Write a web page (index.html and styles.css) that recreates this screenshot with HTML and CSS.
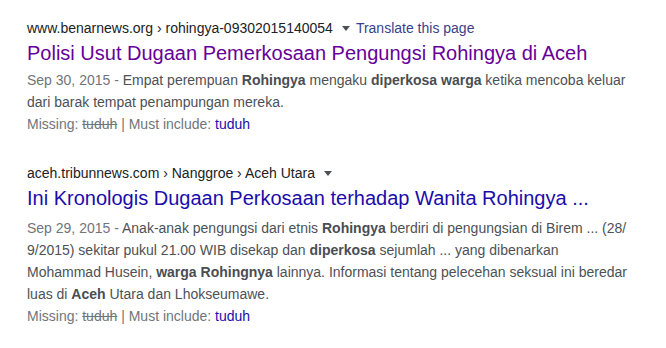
FILE: index.html
```html
<!DOCTYPE html>
<html lang="id">
<head>
<meta charset="utf-8">
<link rel="stylesheet" href="styles.css">
</head>
<body>
<div class="results">
  <div class="result">
    <div class="cite-row">
      <span class="cite">www.benarnews.org › rohingya-09302015140054</span>
      <span class="caret"></span>
      <span class="translate">Translate this page</span>
    </div>
    <div class="title visited">Polisi Usut Dugaan Pemerkosaan Pengungsi Rohingya di Aceh</div>
    <div class="snippet"><span class="date">Sep 30, 2015 -</span> Empat perempuan <b>Rohingya</b> mengaku <b>diperkosa warga</b> ketika mencoba keluar dari barak tempat penampungan mereka.</div>
    <div class="missing">Missing: <s>tuduh</s> | Must include: <span class="must">tuduh</span></div>
  </div>
  <div class="result second">
    <div class="cite-row">
      <span class="cite">aceh.tribunnews.com › Nanggroe › Aceh Utara</span>
      <span class="caret"></span>
    </div>
    <div class="title">Ini Kronologis Dugaan Perkosaan terhadap Wanita Rohingya ...</div>
    <div class="snippet"><span class="date">Sep 29, 2015 -</span> Anak-anak pengungsi dari etnis <b>Rohingya</b> berdiri di pengungsian di Birem ... (28/<wbr>9/2015) sekitar pukul 21.00 WIB disekap dan <b>diperkosa</b> sejumlah ... yang dibenarkan Mohammad Husein, <b>warga Rohingnya</b> lainnya. Informasi tentang pelecehan seksual ini beredar luas di <b>Aceh</b> Utara dan Lhokseumawe.</div>
    <div class="missing">Missing: <s>tuduh</s> | Must include: <span class="must">tuduh</span></div>
  </div>
</div>
</body>
</html>
```
FILE: styles.css
```css
html, body {
  margin: 0;
  padding: 0;
  background: #ffffff;
}
body {
  font-family: "Liberation Sans", Arial, sans-serif;
}
.results {
  padding: 18px 0 0 27px;
  display: flex;
  flex-direction: column;
  gap: 28px;
}
.result {
  width: 600px;
}
.cite-row {
  display: flex;
  align-items: center;
  font-size: 14px;
  line-height: 20px;
  height: 20px;
}
.cite {
  color: #202124;
}
.caret {
  width: 0;
  height: 0;
  border-left: 4px solid transparent;
  border-right: 4px solid transparent;
  border-top: 5px solid #4d5156;
  margin: 1px 6px 0 9px;
}
.translate {
  color: #3b3f88;
}
.title {
  font-size: 20px;
  line-height: 26px;
  margin-top: 2px;
  color: #1a0dab;
  white-space: nowrap;
}
.title.visited {
  color: #660099;
}
.snippet {
  font-size: 14px;
  line-height: 22px;
  color: #4d5156;
  margin-top: 3px;
}
.second .snippet {
  margin-top: 6px;
}
.snippet b {
  color: #4a4d52;
  font-weight: bold;
}
.date {
  color: #70757a;
}
.missing {
  font-size: 14px;
  line-height: 22px;
  color: #70757a;
}
.missing s {
  color: #70757a;
}
.must {
  color: #1a0dab;
}
```
